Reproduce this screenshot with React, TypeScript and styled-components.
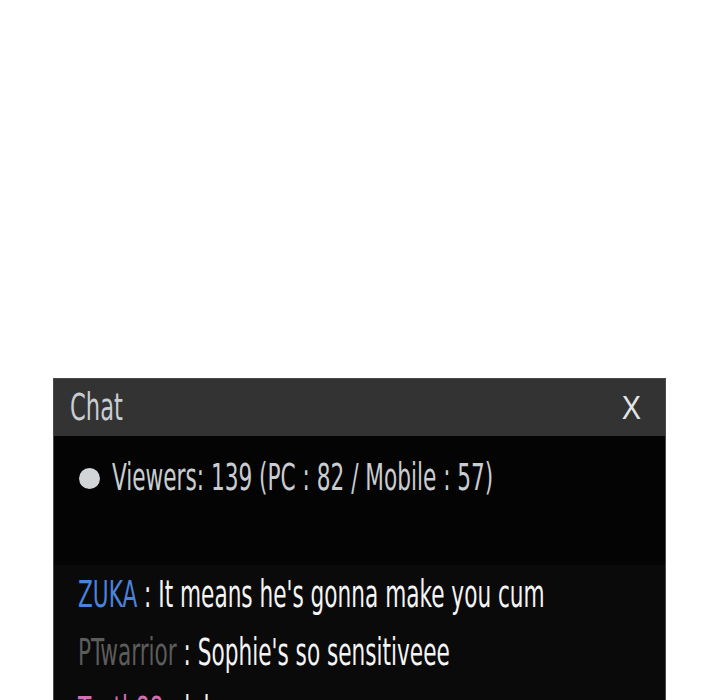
import styled, { createGlobalStyle } from 'styled-components'

const GlobalStyle = createGlobalStyle`
  html, body {
    margin: 0;
    padding: 0;
    background: #ffffff;
  }
  body {
    font-family: 'Liberation Sans Narrow', 'DejaVu Sans Condensed', 'Liberation Sans', sans-serif;
  }
`

const Page = styled.div`
  width: 720px;
  height: 700px;
  overflow: hidden;
  display: flex;
  flex-direction: column;
  padding-top: 378px;
  box-sizing: border-box;
`

const Panel = styled.div`
  margin-left: 53px;
  width: 613px;
  flex: 1;
  border: 1px solid #4a4a4a;
  border-bottom: none;
  box-sizing: border-box;
  display: flex;
  flex-direction: column;
  background: #0a0a0a;
`

const Header = styled.div`
  height: 57px;
  background: #333333;
  display: flex;
  align-items: center;
  justify-content: space-between;
  padding: 0 22px 0 16px;
`

const Title = styled.span`
  color: #c9cdd1;
  font-size: 37px;
  display: inline-block;
  transform: scaleX(0.68);
  transform-origin: left center;
`

const Close = styled.span`
  color: #e2e4e6;
  font-size: 34px;
  font-family: 'Liberation Sans', sans-serif;
  display: inline-block;
  transform: scaleX(0.85);
`

const Status = styled.div`
  background: #040404;
  height: 129px;
  padding: 20px 0 0 25px;
  box-sizing: border-box;
  display: flex;
  align-items: flex-start;
  gap: 12px;
`

const Dot = styled.span`
  width: 21px;
  height: 21px;
  border-radius: 50%;
  background: #d2d5d8;
  margin-top: 12px;
  flex-shrink: 0;
`

const Line = styled.span<{ $color?: string }>`
  color: ${p => p.$color || '#f4f4f4'};
  font-size: 37px;
  line-height: 44px;
  display: inline-block;
  transform: scaleX(0.65);
  transform-origin: left center;
  white-space: nowrap;
`

const Messages = styled.div`
  display: flex;
  flex-direction: column;
  align-items: flex-start;
  gap: 14px;
  padding: 8px 0 0 24px;
`

const Name = styled.span<{ $color: string }>`
  color: ${p => p.$color};
`

interface Msg {
  name: string
  color: string
  text: string
}

const messages: Msg[] = [
  { name: 'ZUKA', color: '#4a82dc', text: "It means he's gonna make you cum" },
  { name: 'PTwarrior', color: '#5c5c5c', text: "Sophie's so sensitiveee" },
  { name: 'Tooth88', color: '#d46fb6', text: 'lol' },
]

const App = () => {
  return (
    <Page>
      <GlobalStyle />
      <Panel>
        <Header>
          <Title>Chat</Title>
          <Close>X</Close>
        </Header>
        <Status>
          <Dot />
          <Line $color='#c9cdd1'>Viewers: 139 (PC : 82 / Mobile : 57)</Line>
        </Status>
        <Messages>
          {messages.map(m => (
            <Line key={m.name}>
              <Name $color={m.color}>{m.name}</Name> : {m.text}
            </Line>
          ))}
        </Messages>
      </Panel>
    </Page>
  )
}

export default App
